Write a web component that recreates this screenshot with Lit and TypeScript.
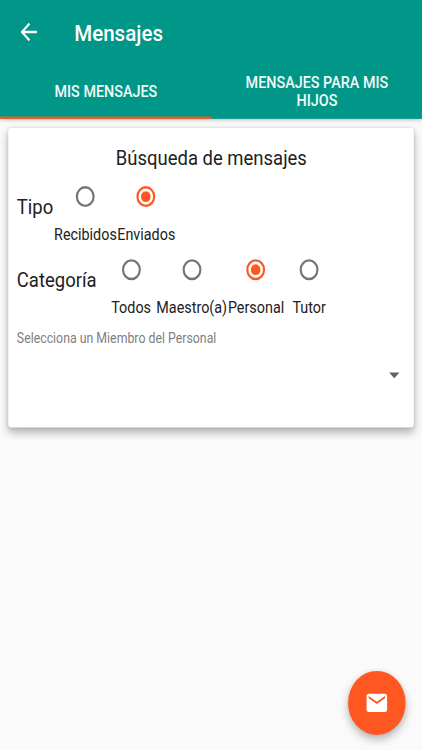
import { LitElement, html, css } from "lit";
import { customElement, property, state } from "lit/decorators.js";

@customElement("radio-option")
class RadioOption extends LitElement {
  @property() label = "";
  @property({ type: Boolean }) checked = false;
  static styles = css`
    :host { display: flex; flex-direction: column; align-items: center; }
    .icon { width: 24px; height: 24px; margin: 4.5px 0 12.2px; fill: #757575; }
    .on { fill: #ff5722; }
    .label { height: 17px; line-height: 17px; font-size: 14px; color: #212121; white-space: nowrap; }
  `;
  render() {
    return html`
      <svg class="icon ${this.checked ? "on" : ""}" viewBox="0 0 24 24">
        <path fill-rule="evenodd" d="M12 2.8a9.2 9.2 0 1 0 0 18.4a9.2 9.2 0 0 0 0-18.4zm0 2.1a7.1 7.1 0 1 1 0 14.2a7.1 7.1 0 0 1 0-14.2z" />
        ${this.checked ? html`<svg viewBox="0 0 24 24"><circle cx="12" cy="12" r="4.7" /></svg>` : ""}
      </svg>
      <span class="label">${this.label}</span>
    `;
  }
}

@customElement("app-root")
class AppRoot extends LitElement {
  @state() tipo = "Enviados";
  @state() categoria = "Personal";

  static styles = css`
    :host { display: block; width: 422px; height: 750px; overflow: hidden; position: relative; background: #fafafa; }
    .screen {
      width: 411px; height: 656.25px; position: relative; display: flex; flex-direction: column;
      transform: scale(1.0268, 1.1429); transform-origin: 0 0;
      font-family: Roboto, sans-serif; color: #212121;
    }
    .header { height: 104px; flex: none; background: #009688; color: #fff; box-shadow: 0 1px 4px rgba(0,0,0,.3); }
    .bar { height: 56px; display: flex; align-items: center; padding: 1px 16px 0; box-sizing: border-box; }
    .back { width: 24px; height: 24px; fill: #fff; margin: 0 32px 1.2px 0.3px; }
    .title { font-size: 20px; font-weight: 500; line-height: 24px; }
    .tabs { height: 48px; display: grid; grid-template-columns: 1fr 1fr; }
    .tab {
      display: flex; align-items: center; justify-content: center; text-align: center;
      padding: 1.6px 29.6px 0 30.4px; font-size: 14px; font-weight: 500; line-height: 16px;
      border-bottom: 2px solid transparent; box-sizing: border-box; color: #f2faf9;
    }
    .active { border-color: #ff5722; }
    .card {
      margin: 8.2px 7.8px 0 8.4px; height: 262px; padding: 15.3px 8px 0; box-sizing: border-box;
      background: #fff; border-radius: 3px;
      box-shadow: 0 4px 8px rgba(0,0,0,.28), 0 0 3px rgba(0,0,0,.12);
    }
    .heading { font-size: 18px; line-height: 22px; height: 28.5px; text-align: center; }
    .row { display: flex; height: 64px; }
    .name { font-size: 18px; line-height: 22px; padding-top: 13.8px; white-space: nowrap; }
    .type { width: 36px; }
    .category { width: 87.3px; }
    .w62 { width: 61.6px; }
    .w57 { width: 57px; }
    .w48 { width: 48px; }
    .w70 { width: 70px; }
    .w56 { width: 55.4px; }
    .caption { font-size: 12px; line-height: 14px; color: #808080; padding-top: 4.6px; }
    .spinner { display: flex; justify-content: flex-end; padding: 13.6px 0 0; }
    .caret { width: 24px; height: 24px; fill: #616161; margin-right: -0.4px; }
    .fab {
      position: absolute; right: 15.9px; bottom: 12.8px; width: 56px; height: 56px; border-radius: 50%;
      background: #ff5722; display: flex; align-items: center; justify-content: center;
      box-shadow: 0 4px 8px rgba(0,0,0,.28), 0 0 3px rgba(0,0,0,.08);
    }
    .mail { width: 24px; height: 24px; fill: #fff; }
  `;

  render() {
    const tipos = [["Recibidos", "w62"], ["Enviados", "w57"]];
    const categorias = [["Todos", "w48"], ["Maestro(a)", "w70"], ["Personal", "w56"], ["Tutor", "w48"]];
    return html`
      <div class="screen">
        <header class="header">
          <div class="bar">
            <svg class="back" viewBox="0 0 24 24"><path d="M20 11H7.83l5.59-5.59L12 4l-8 8 8 8 1.41-1.41L7.83 13H20v-2z" /></svg>
            <span class="title">Mensajes</span>
          </div>
          <nav class="tabs">
            <div class="tab active">MIS MENSAJES</div>
            <div class="tab">MENSAJES PARA MIS HIJOS</div>
          </nav>
        </header>
        <section class="card">
          <div class="heading">Búsqueda de mensajes</div>
          <div class="row">
            <span class="name type">Tipo</span>
            ${tipos.map(([t, w]) => html`<radio-option class=${w} .label=${t} .checked=${t === this.tipo} @click=${() => (this.tipo = t)}></radio-option>`)}
          </div>
          <div class="row">
            <span class="name category">Categoría</span>
            ${categorias.map(([t, w]) => html`<radio-option class=${w} .label=${t} .checked=${t === this.categoria} @click=${() => (this.categoria = t)}></radio-option>`)}
          </div>
          <div class="caption">Selecciona un Miembro del Personal</div>
          <div class="spinner">
            <svg class="caret" viewBox="0 0 24 24"><path d="M7 10l5 5 5-5z" /></svg>
          </div>
        </section>
        <div class="fab">
          <svg class="mail" viewBox="0 0 24 24"><path d="M20 4H4c-1.1 0-1.99.9-1.99 2L2 18c0 1.1.9 2 2 2h16c1.1 0 2-.9 2-2V6c0-1.1-.9-2-2-2zm0 4l-8 5-8-5V6l8 5 8-5v2z" /></svg>
        </div>
      </div>
    `;
  }
}
